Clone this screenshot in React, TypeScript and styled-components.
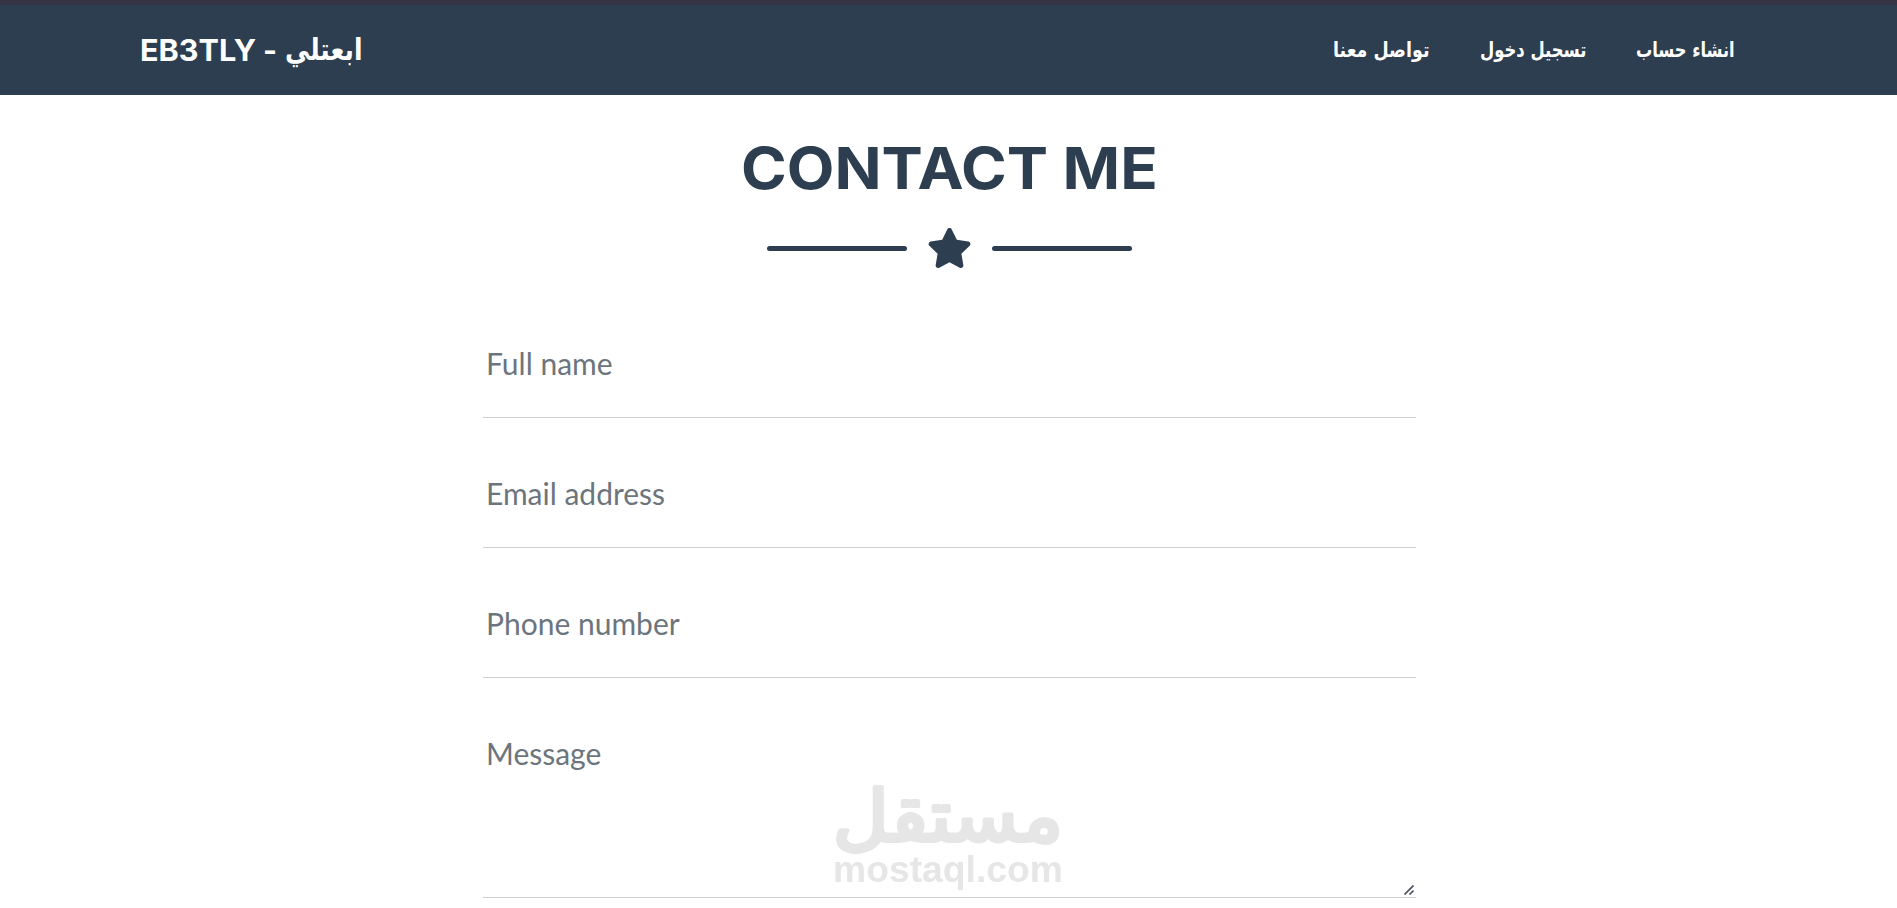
import React from 'react';
import { FaStar } from 'react-icons/fa';
import styled, { createGlobalStyle } from 'styled-components';

const GlobalStyle = createGlobalStyle`
    * {
        box-sizing: border-box;
    }

    body {
        margin: 0;
        background: #fff;
        color: #2c3e50;
        font-family: Lato, 'Liberation Sans', sans-serif;
        overflow: hidden;
    }
`;

const Page = styled.div`
    height: 908px;
    overflow: hidden;
`;

const Navbar = styled.nav`
    display: flex;
    justify-content: space-between;
    align-items: center;
    height: 95px;
    padding: 0 162px 0 140px;
    background: #2c3e50;
    border-top: 5px solid #343444;
`;

const Brand = styled.a`
    display: flex;
    align-items: center;
    gap: 8px;
    color: #fff;
    font: 700 30px/40px Inter, sans-serif;
    text-decoration: none;
`;

const Stretch = styled.span<{ $x?: number }>`
    display: inline-block;
    transform: scaleX(${({ $x = 1 }) => $x});
    transform-origin: left center;
    white-space: nowrap;
`;

const BrandLatin = styled(Stretch)`
    width: 115px;
`;

const BrandArabic = styled(Stretch)`
    width: 78px;
    direction: ltr;
    font: 700 30px/42px 'DejaVu Sans', sans-serif;
`;

const NavList = styled.ul`
    display: flex;
    gap: 50px;
    margin: 0;
    padding: 0;
    list-style: none;
`;

const NavItem = styled.li<{ $width: number }>`
    width: ${({ $width }) => $width}px;
    color: #fff;
    font: 700 21px/26px 'DejaVu Sans', sans-serif;
`;

const Section = styled.main`
    display: flex;
    flex-direction: column;
    align-items: center;
    padding: 37px 0 0 2px;
`;

const Title = styled.h2`
    margin: 0;
    font: 700 58px/72px Inter, sans-serif;
    transform: scaleX(1.066);
    white-space: nowrap;
`;

const Divider = styled.div`
    display: flex;
    align-items: center;
    gap: 20px;
    margin-top: 24px;

    svg {
        width: 45px;
        height: 40px;
    }
`;

const DividerLine = styled.div`
    width: 140px;
    height: 5px;
    border-radius: 4px;
    background: #2c3e50;
`;

const Form = styled.form`
    width: 933px;
    margin-top: 20px;
`;

const Input = styled.input`
    display: block;
    width: 100%;
    height: 98px;
    margin-top: 32px;
    padding: 0 3px 12px;
    border: 0;
    border-bottom: 1px solid #ced0d6;
    background: none;
    font: 400 30px/45px Lato, sans-serif;
    outline: none;

    &::placeholder {
        color: #6c757d;
        opacity: 1;
    }
`;

const MessageBox = styled.div`
    position: relative;
    margin-top: 32px;
`;

const Message = styled.textarea`
    display: block;
    width: 100%;
    height: 188px;
    padding: 21px 3px;
    border: 0;
    border-bottom: 1px solid #ced0d6;
    background: none;
    font: 400 30px/45px Lato, sans-serif;
    outline: none;
    overflow: hidden;
    resize: none;

    &::placeholder {
        color: #6c757d;
        opacity: 1;
    }
`;

const Grip = styled.svg`
    position: absolute;
    right: 2px;
    bottom: 3px;
`;

const Watermark = styled.svg`
    position: fixed;
    left: 830px;
    top: 780px;
    overflow: visible;
    pointer-events: none;
`;

const links = [
    { label: 'تواصل معنا', width: 97, stretch: 0.833 },
    { label: 'تسجيل دخول', width: 106, stretch: 0.78 },
    { label: 'انشاء حساب', width: 99, stretch: 0.771 },
];

const fields = ['Full name', 'Email address', 'Phone number'];

const App = () => {
    return (
        <Page>
            <GlobalStyle />
            <Navbar>
                <Brand>
                    <BrandLatin $x={1.02}>EB3TLY</BrandLatin>
                    <span>-</span>
                    <BrandArabic $x={0.83}>ابعتلي</BrandArabic>
                </Brand>
                <NavList>
                    {links.map((link) => (
                        <NavItem key={link.label} $width={link.width}>
                            <Stretch $x={link.stretch}>{link.label}</Stretch>
                        </NavItem>
                    ))}
                </NavList>
            </Navbar>

            <Section>
                <Title>CONTACT ME</Title>
                <Divider>
                    <DividerLine />
                    <FaStar />
                    <DividerLine />
                </Divider>
                <Form>
                    {fields.map((field) => (
                        <Input key={field} placeholder={field} />
                    ))}
                    <MessageBox>
                        <Message placeholder="Message" />
                        <Grip width="10" height="10" viewBox="0 0 10 10" stroke="#4b5563" strokeWidth="1.7">
                            <path d="M0.5 9.5L9.5 0.5M5.5 9.5L9.5 5.5" />
                        </Grip>
                    </MessageBox>
                </Form>
            </Section>

            <Watermark width="236" height="112" viewBox="0 0 236 112" fill="#e6e6e6">
                <text
                    transform="translate(118 61) scale(1.04 0.96)"
                    textAnchor="middle"
                    fontFamily="DejaVu Sans"
                    fontSize="74"
                    stroke="#e6e6e6"
                    strokeWidth="4"
                    strokeLinecap="round"
                    strokeLinejoin="round"
                >
                    مستقل
                </text>
                <text
                    x="3"
                    y="102"
                    fontFamily="Liberation Sans"
                    fontWeight="700"
                    fontSize="37"
                    textLength="230"
                    lengthAdjust="spacingAndGlyphs"
                >
                    mostaql.com
                </text>
            </Watermark>
        </Page>
    );
};

export default App;
